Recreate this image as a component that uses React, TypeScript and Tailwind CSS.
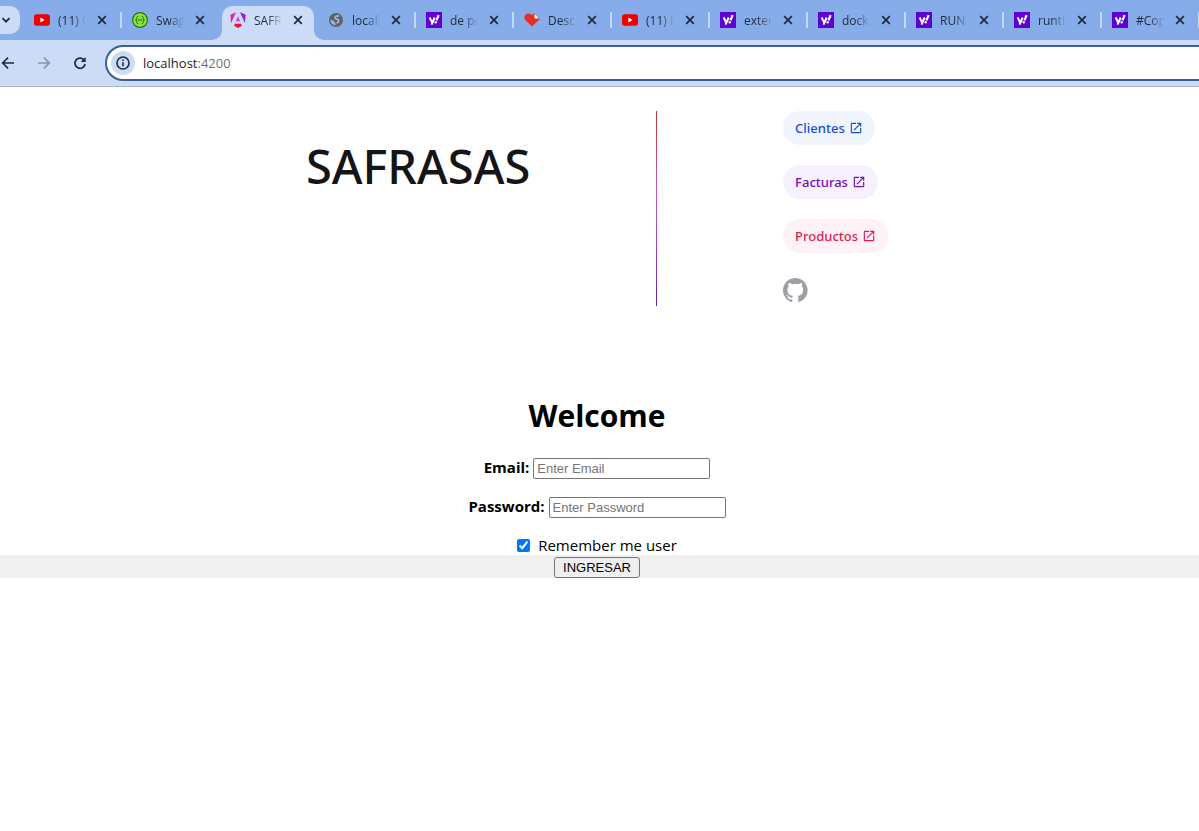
import type { ReactNode } from 'react';

type IconKind = 'youtube' | 'swagger' | 'angular' | 'globe' | 'yahoo' | 'heart';

const tabs: { icon: IconKind; title: string; active?: boolean }[] = [
  { icon: 'youtube', title: '(11) C' },
  { icon: 'swagger', title: 'Swag' },
  { icon: 'angular', title: 'SAFR', active: true },
  { icon: 'globe', title: 'locall' },
  { icon: 'yahoo', title: 'de po' },
  { icon: 'heart', title: 'Desca' },
  { icon: 'youtube', title: '(11) D' },
  { icon: 'yahoo', title: 'exter' },
  { icon: 'yahoo', title: 'docke' },
  { icon: 'yahoo', title: 'RUN' },
  { icon: 'yahoo', title: 'runtin' },
  { icon: 'yahoo', title: '#Cop' },
];

function Favicon({ kind }: { kind: IconKind }) {
  switch (kind) {
    case 'youtube':
      return (
        <svg viewBox="0 0 16 16" className="size-4 shrink-0" aria-hidden="true">
          <rect x="0" y="2.3" width="16" height="11.4" rx="2.6" fill="#f00000" />
          <path d="M6.4 5.6v4.8L10.6 8z" fill="#fff" />
        </svg>
      );
    case 'swagger':
      return (
        <svg viewBox="0 0 16 16" className="size-4 shrink-0" aria-hidden="true">
          <circle cx="8" cy="8" r="7.4" fill="#85ea2d" stroke="#2f6b2f" strokeWidth="1.2" />
          <path
            d="M6.3 4.4c-1.3 0-1.5.5-1.5 1.3v1c0 .8-.4 1.2-1.3 1.3.9.1 1.3.5 1.3 1.3v1c0 .8.2 1.3 1.5 1.3M9.7 4.4c1.3 0 1.5.5 1.5 1.3v1c0 .8.4 1.2 1.3 1.3-.9.1-1.3.5-1.3 1.3v1c0 .8-.2 1.3-1.5 1.3M6 8h4"
            fill="none"
            stroke="#245c2b"
            strokeWidth="1"
          />
        </svg>
      );
    case 'angular':
      return (
        <svg viewBox="0 0 24 24" className="size-4 shrink-0" aria-hidden="true">
          <defs>
            <linearGradient id="shield" x1="0" y1="0.6" x2="1" y2="0.3">
              <stop offset="0" stopColor="#f0189c" />
              <stop offset="0.5" stopColor="#d63bd6" />
              <stop offset="1" stopColor="#6a1be0" />
            </linearGradient>
          </defs>
          <path
            d="M14.692 0l7.832 16.855.814-12.856L14.692 0ZM9.308 0 .662 3.999l.814 12.856L9.308 0Zm-.405 13.93h6.198L12 6.396 8.903 13.93Z"
            fill="url(#shield)"
          />
          <path d="M16.712 17.711H7.288l-1.204 2.916L12 24l5.916-3.373-1.204-2.916Z" fill="#e8133c" />
        </svg>
      );
    case 'globe':
      return (
        <svg viewBox="0 0 16 16" className="size-4 shrink-0" aria-hidden="true">
          <circle cx="8" cy="8" r="7" fill="#5f6368" />
          <path
            d="M11.3 4.300C9.800 3.600 7.200 4 6.900 5.500 6.600 7.200 9.400 6.900 10.300 7.900c1 1.100-.2 2.700-1.700 3.300"
            fill="none"
            stroke="#a3b7da"
            strokeWidth="1.700"
          />
          <path d="M2.500 7.600l3.200 1.300c1 .5.8 1.300 1.500 1.800.7.500.5 1.300.4 2.500-2.900-.1-5.200-2.400-5.100-5.600z" fill="#a3b7da" />
        </svg>
      );
    case 'yahoo':
      return (
        <svg viewBox="0 0 16 16" className="size-4 shrink-0" aria-hidden="true">
          <rect width="16" height="16" fill="#5f01d1" />
          <path d="M3.700 5.500l2.200 4.600M8.700 5.500L5.500 12.700" stroke="#fff" strokeWidth="2" fill="none" />
          <path d="M12.600 3.200L10.500 8.300" stroke="#fff" strokeWidth="2.200" />
          <circle cx="9.700" cy="10.200" r="1.200" fill="#fff" />
        </svg>
      );
    case 'heart':
      return (
        <svg viewBox="0 0 16 16" className="size-4 shrink-0" aria-hidden="true">
          <path d="M8 14.500L1.200 8C-.5 6 .3 2.500 3.300 1.700 5.300 1.300 7 2 8 3.500 9 2 9.500 1.700 10.500 1.500L16 7z" fill="#e5302a" />
          <path d="M10.500 2l4.500 4.600h-4.500z" fill="#fff" />
        </svg>
      );
  }
}

function CloseIcon() {
  return (
    <svg viewBox="0 0 16 16" className="size-4" aria-hidden="true">
      <path d="M4.200 4.200l7.600 7.600M11.800 4.200l-7.600 7.600" stroke="#1f2a3c" strokeWidth="1.700" />
    </svg>
  );
}

function TabStrip() {
  return (
    <div className="flex h-10 overflow-hidden bg-[#86ace9]">
      <button aria-label="Search tabs" className="mt-[6px] mr-[2px] flex h-7 w-5 shrink-0 items-center rounded-r-[10px] bg-[#ccdcf7]">
        <svg viewBox="0 0 12 12" className="size-3" aria-hidden="true">
          <path d="M2.500 4.200L6 7.700l3.500-3.500" fill="none" stroke="#1f2a3c" strokeWidth="1.800" />
        </svg>
      </button>
      {tabs.map((tab, i) => {
        const divided = i > 0 && !tab.active && !tabs[i - 1].active;
        return (
          <div key={i} className="relative flex w-[98px] shrink-0 items-center">
            {tab.active && (
              <div className="absolute inset-x-0 top-[6px] bottom-0 pr-[2px] pl-1" aria-hidden="true">
                <div className="relative h-full rounded-t-[10px] bg-[#ccdcf7]">
                  <svg viewBox="0 0 10 10" className="absolute bottom-0 -left-[10px] size-[10px]">
                    <path d="M10 0v10H0A10 10 0 0 0 10 0z" fill="#ccdcf7" />
                  </svg>
                  <svg viewBox="0 0 10 10" className="absolute -right-[10px] bottom-0 size-[10px]">
                    <path d="M0 0v10h10A10 10 0 0 1 0 0z" fill="#ccdcf7" />
                  </svg>
                </div>
              </div>
            )}
            <span className={divided ? 'h-4 w-[2px] bg-[#c4d8f8]' : 'h-4 w-[2px]'} />
            <div className="relative flex items-center pl-[10px]">
              <Favicon kind={tab.icon} />
              <span className="ml-2 w-7 mask-r-from-50% pt-[2px] text-[12px] leading-4 whitespace-nowrap text-[#1f2a3c]">
                {tab.title}
              </span>
              <button aria-label={`Close ${tab.title}`} className="ml-2">
                <CloseIcon />
              </button>
            </div>
          </div>
        );
      })}
      <span className="mt-3 h-4 w-[2px] shrink-0 bg-[#c4d8f8]" />
    </div>
  );
}

function NavButton({ label, muted, children }: { label: string; muted?: boolean; children: ReactNode }) {
  return (
    <button aria-label={label} className={muted ? 'size-4 shrink-0 text-[#8592ab]' : 'size-4 shrink-0 text-[#1f2a3c]'}>
      <svg viewBox="0 0 16 16" className="size-4" fill="none" stroke="currentColor" strokeWidth="1.700" aria-hidden="true">
        {children}
      </svg>
    </button>
  );
}

function Toolbar() {
  return (
    <div className="flex h-[47px] items-center overflow-hidden border-b border-[#a9b4c8] bg-[#ccdcf7]">
      <NavButton label="Back">
        <path d="M14 8H2.800M8 2.700L2.700 8 8 13.300" />
      </NavButton>
      <span className="w-5 shrink-0" />
      <NavButton label="Forward" muted>
        <path d="M2 8h11.200M8 2.700L13.300 8 8 13.300" />
      </NavButton>
      <span className="w-5 shrink-0" />
      <NavButton label="Reload">
        <path d="M12.300 5.300A5.100 5.100 0 1 0 13.100 9" />
        <path d="M13.700 2v5H8.700z" fill="currentColor" stroke="none" />
      </NavButton>
      <div className="-mr-1 ml-[17px] flex h-9 flex-1 items-center rounded-l-full border-2 border-[#3f5f94] bg-white pl-1">
        <button aria-label="Site information" className="flex size-6 items-center justify-center rounded-full bg-[#ccdcf7]">
          <svg viewBox="0 0 16 16" className="size-4" aria-hidden="true">
            <circle cx="8" cy="8" r="6" fill="none" stroke="#1f2a3c" strokeWidth="1.600" />
            <path d="M8 7.200v4M8 4.600v1.500" stroke="#1f2a3c" strokeWidth="1.600" />
          </svg>
        </button>
        <span className="ml-2 pt-px text-[13px] text-[#1f2328]">
          localhost<span className="text-[#6b7178]">:4200</span>
        </span>
      </div>
    </div>
  );
}

const links = [
  { label: 'Clientes', style: 'bg-[#f1f6fe] text-[#1b4bd0]' },
  { label: 'Facturas', style: 'bg-[#f6f1fd] text-[#7510b0]' },
  { label: 'Productos', style: 'bg-[#fef2f6] text-[#dc1f50]' },
];

function Header() {
  return (
    <header className="mx-auto flex w-full max-w-[700px] justify-around pt-6">
      <h1 className='mt-5 font-["Noto_Sans",sans-serif] text-[47px] leading-[70px] font-medium text-[#151417]'>SAFRASAS</h1>
      <div className="mx-2 w-px bg-[linear-gradient(180deg,#c23a30_0%,#c858b4_40%,#a850c0_60%,#6024a8_100%)]" />
      <div className="flex flex-col items-start gap-5 pb-1">
        {links.map((link) => (
          <a key={link.label} href="#" className={`flex items-center gap-1 rounded-full px-3 py-[6px] font-["Noto_Sans",sans-serif] text-[13px] leading-[22px] font-medium ${link.style}`}>
            {link.label}
            <svg viewBox="0 0 24 24" className="size-[14px]" fill="currentColor" aria-hidden="true">
              <path d="M19 19H5V5h7V3H5a2 2 0 0 0-2 2v14a2 2 0 0 0 2 2h14c1.100 0 2-.9 2-2v-7h-2v7zM14 3v2h3.590l-9.830 9.830 1.410 1.410L19 6.410V10h2V3h-7z" />
            </svg>
          </a>
        ))}
        <a href="#" aria-label="Github" className="mt-[5px] text-[#a09fa8]">
          <svg viewBox="0 0 25 24" className="h-6 w-[25px]" fill="currentColor" aria-hidden="true">
            <path d="M12.3047 0C5.50634 0 0 5.50942 0 12.3047C0 17.7423 3.52529 22.3535 8.41332 23.9787C9.02856 24.0946 9.25414 23.7142 9.25414 23.3871C9.25414 23.0949 9.24389 22.3207 9.23876 21.2953C5.81601 22.0377 5.09414 19.6444 5.09414 19.6444C4.53427 18.2243 3.72524 17.8449 3.72524 17.8449C2.61064 17.082 3.81137 17.0973 3.81137 17.0973C5.04697 17.1835 5.69604 18.3647 5.69604 18.3647C6.79321 20.2463 8.57636 19.7029 9.27978 19.3881C9.39052 18.5924 9.70736 18.0499 10.0591 17.7423C7.32641 17.4347 4.45429 16.3765 4.45429 11.6618C4.45429 10.3185 4.9311 9.22133 5.72065 8.36C5.58222 8.04931 5.16694 6.79833 5.82831 5.10337C5.82831 5.10337 6.85883 4.77319 9.2121 6.36459C10.1965 6.09082 11.2424 5.95546 12.2883 5.94931C13.3342 5.95546 14.3801 6.09082 15.3644 6.36459C17.7023 4.77319 18.7328 5.10337 18.7328 5.10337C19.3942 6.79833 18.9789 8.04931 18.8559 8.36C19.6403 9.22133 20.1171 10.3185 20.1171 11.6618C20.1171 16.3888 17.2409 17.4296 14.5031 17.7321C14.9338 18.1012 15.3337 18.8559 15.3337 20.0084C15.3337 21.6552 15.3183 22.978 15.3183 23.3779C15.3183 23.7009 15.5336 24.0854 16.1642 23.9623C21.0871 22.3484 24.6094 17.7341 24.6094 12.3047C24.6094 5.50942 19.0999 0 12.3047 0Z" />
          </svg>
        </a>
      </div>
    </header>
  );
}

const inputClass =
  'h-[21px] w-[177px] rounded-[2px] border border-[#767676] bg-white px-[3px] font-["Liberation_Sans",Arial,sans-serif] text-[13px] text-black placeholder:text-[#757575]';

const labelClass = 'pb-[3px] text-[15px] leading-[18px] font-bold text-black';

function LoginForm() {
  return (
    <form className="mt-[88px]" onSubmit={(e) => e.preventDefault()}>
      <div className="flex flex-col items-center pr-[5px]">
        <h2 className="text-[30px] leading-[44px] font-bold text-black">Welcome</h2>
        <div className="mt-5 flex items-center gap-1">
          <label htmlFor="email" className={labelClass}>Email:</label>
          <input id="email" type="email" placeholder="Enter Email" className={inputClass} />
        </div>
        <div className="mt-[18px] flex items-center gap-1">
          <label htmlFor="password" className={labelClass}>Password:</label>
          <input id="password" type="password" placeholder="Enter Password" className={inputClass} />
        </div>
        <label className="mt-[17px] flex items-center gap-2 text-[15px] leading-5 text-black">
          <input type="checkbox" defaultChecked className="size-[13px]" />
          Remember me user
        </label>
      </div>
      <div className="flex justify-center bg-[#f0f0f0] pt-[2px] pr-[5px]">
        <button type="submit" className='h-[21px] rounded-[3px] border border-[#767676] bg-[#efefef] px-2 font-["Liberation_Sans",Arial,sans-serif] text-[13px] leading-[19px] text-black'>
          INGRESAR
        </button>
      </div>
    </form>
  );
}

export default function App() {
  return (
    <div className='min-h-screen bg-white font-["Open_Sans","Noto_Sans",sans-serif]'>
      <TabStrip />
      <Toolbar />
      <main>
        <div className="pr-[5px]">
          <Header />
        </div>
        <LoginForm />
      </main>
    </div>
  );
}
